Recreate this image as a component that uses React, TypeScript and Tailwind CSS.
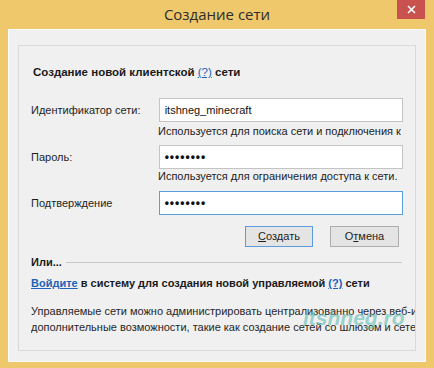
import React from "react";

const font = { fontFamily: '"Liberation Sans", Arial, sans-serif' };

function Field({ label, value, password, focused }: { label: string; value: string; password?: boolean; focused?: boolean }) {
  return (
    <div className="flex items-center">
      <div className="w-[128px] text-[11px] text-[#1e1e1e]">{label}</div>
      <div
        className={`w-[245px] h-[24px] flex items-center px-[5px] bg-white border ${
          focused ? "border-[#5b9ee0]" : "border-[#c4c4c4]"
        }`}
      >
        {password ? (
          <span className="text-[12px] tracking-[1px] text-[#111] font-bold">{value}</span>
        ) : (
          <span className="text-[11px] text-[#111]">{value}</span>
        )}
      </div>
    </div>
  );
}

function Hint({ text }: { text: string }) {
  return <div className="pl-[127px] text-[11px] leading-[14px] text-[#222] whitespace-nowrap">{text}</div>;
}

export default function App() {
  return (
    <div className="w-[434px] h-[368px] bg-[#f0c86c] flex flex-col overflow-hidden" style={font}>
      <div className="relative h-[29px] flex items-center justify-center">
        <span className="text-[15px] text-[#2d2d2d] mt-[-1px]" style={{ fontFamily: '"Open Sans", sans-serif' }}>
          Создание сети
        </span>
        <div className="absolute top-0 right-[9px] w-[28px] h-[19px] bg-[#c9514e] flex items-center justify-center">
          <svg width="9" height="9" viewBox="0 0 9 9">
            <path d="M1 1 L8 8 M8 1 L1 8" stroke="#fff" strokeWidth="1.6" />
          </svg>
        </div>
      </div>

      <div className="mx-[8px] h-[333px] bg-[#f0f0f0] border border-[#fbfbfb] pt-[15px] px-[9px]">
        <div className="h-[306px] border border-[#dadada] pt-[18px] pl-[12px] pr-[12px]">
          <div className="text-[11.5px] leading-[16px] font-bold text-[#1a1a1a] pl-[2px]">
            Создание новой клиентской <span className="text-[#1a63b8] underline font-normal">(?)</span> сети
          </div>

          <div className="mt-[18px]">
            <Field label="Идентификатор сети:" value="itshneg_minecraft" />
          </div>
          <div className="mt-[2px]">
            <Hint text="Используется для поиска сети и подключения к" />
          </div>

          <div className="mt-[7px]">
            <Field label="Пароль:" value="••••••••" password />
          </div>
          <div className="mt-[0px]">
            <Hint text="Используется для ограничения доступа к сети." />
          </div>

          <div className="mt-[8px]">
            <Field label="Подтверждение" value="••••••••" password focused />
          </div>

          <div className="mt-[11px] flex justify-end gap-[17px] pr-[4px]">
            <button className="w-[68px] h-[21px] text-[11px] text-[#1e1e1e] bg-[#e4e4e4] border border-[#5a9be0]">
              <span className="underline">С</span>оздать
            </button>
            <button className="w-[69px] h-[21px] text-[11px] text-[#1e1e1e] bg-[#e4e4e4] border border-[#adadad]">
              О<span className="underline">т</span>мена
            </button>
          </div>

          <div className="mt-[8px] flex items-center gap-[4px] pr-[1px]">
            <span className="text-[11px] leading-[14px] font-bold text-[#1a1a1a]">Или...</span>
            <div className="flex-1 h-px bg-[#c8c8c8]" />
          </div>

          <div className="mt-[7px] text-[11px] leading-[14px] font-bold text-[#1a1a1a] whitespace-nowrap">
            <span className="text-[#1a63b8] underline">Войдите</span> в систему для создания новой управляемой{" "}
            <span className="text-[#1a63b8] underline">(?)</span> сети
          </div>

          <div className="mt-[13px] mr-[-12px] text-[11px] leading-[16px] text-[#262626] whitespace-nowrap overflow-hidden">
            <div>Управляемые сети можно администрировать централизованно через веб-ин</div>
            <div>дополнительные возможности, такие как создание сетей со шлюзом и сетей</div>
          </div>
          <div className="relative z-10 mt-[-29px] ml-[272px] w-fit text-[21px] leading-[24px] font-bold italic text-[#5fbcb4] opacity-60">
            itshneg.ro
          </div>
        </div>
      </div>
    </div>
  );
}
